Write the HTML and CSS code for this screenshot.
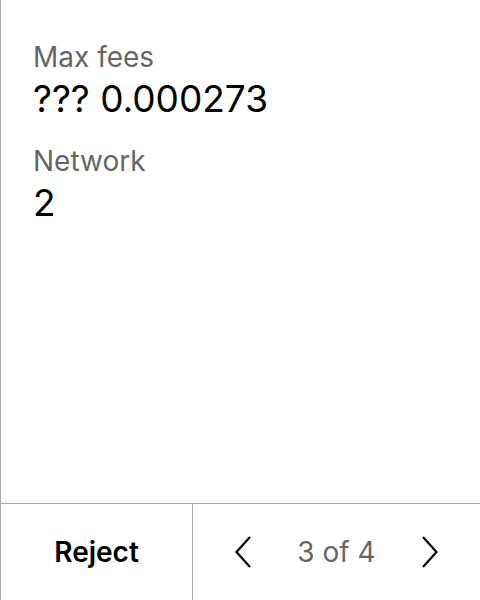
FILE: index.html
```html
<!DOCTYPE html>
<html>
<head>
<meta charset="utf-8">
<link rel="stylesheet" href="styles.css">
</head>
<body>
<div class="panel">
  <div class="content">
    <div class="field">
      <div class="label">Max fees</div>
      <div class="value">??? 0.000273</div>
    </div>
    <div class="field">
      <div class="label">Network</div>
      <div class="value">2</div>
    </div>
  </div>
  <div class="footer">
    <div class="reject">Reject</div>
    <div class="pager">
      <svg class="chev" width="16" height="32" viewBox="0 0 16 32"><path d="M15 1 L1.5 16 L15 31" fill="none" stroke="#000" stroke-width="2.2"/></svg>
      <span class="count">3 of 4</span>
      <svg class="chev" width="16" height="32" viewBox="0 0 16 32"><path d="M1 1 L14.5 16 L1 31" fill="none" stroke="#000" stroke-width="2.2"/></svg>
    </div>
  </div>
</div>
</body>
</html>
```
FILE: styles.css
```css
html, body {
  margin: 0;
  padding: 0;
  background: #fff;
}
body {
  font-family: Inter, "Noto Sans", sans-serif;
  color: #000;
}
.panel {
  width: 480px;
  height: 600px;
  box-sizing: border-box;
  border-left: 1px solid #a8a8a8;
  display: flex;
  flex-direction: column;
}
.content {
  flex: 1;
  padding: 39px 32px 0 32px;
  display: flex;
  flex-direction: column;
  gap: 20px;
}
.label {
  font-size: 28px;
  line-height: 36px;
  color: #666;
}
.value {
  font-size: 37px;
  line-height: 48px;
  color: #000;
}
.footer {
  height: 96px;
  border-top: 1px solid #a8a8a8;
  display: flex;
}
.reject {
  width: 191px;
  border-right: 1px solid #a8a8a8;
  display: flex;
  align-items: center;
  justify-content: center;
  font-size: 28px;
  font-weight: 600;
}
.pager {
  flex: 1;
  display: flex;
  align-items: center;
  justify-content: center;
  gap: 46px;
}
.count {
  font-size: 28px;
  color: #666;
}
.chev {
  display: block;
}
```
